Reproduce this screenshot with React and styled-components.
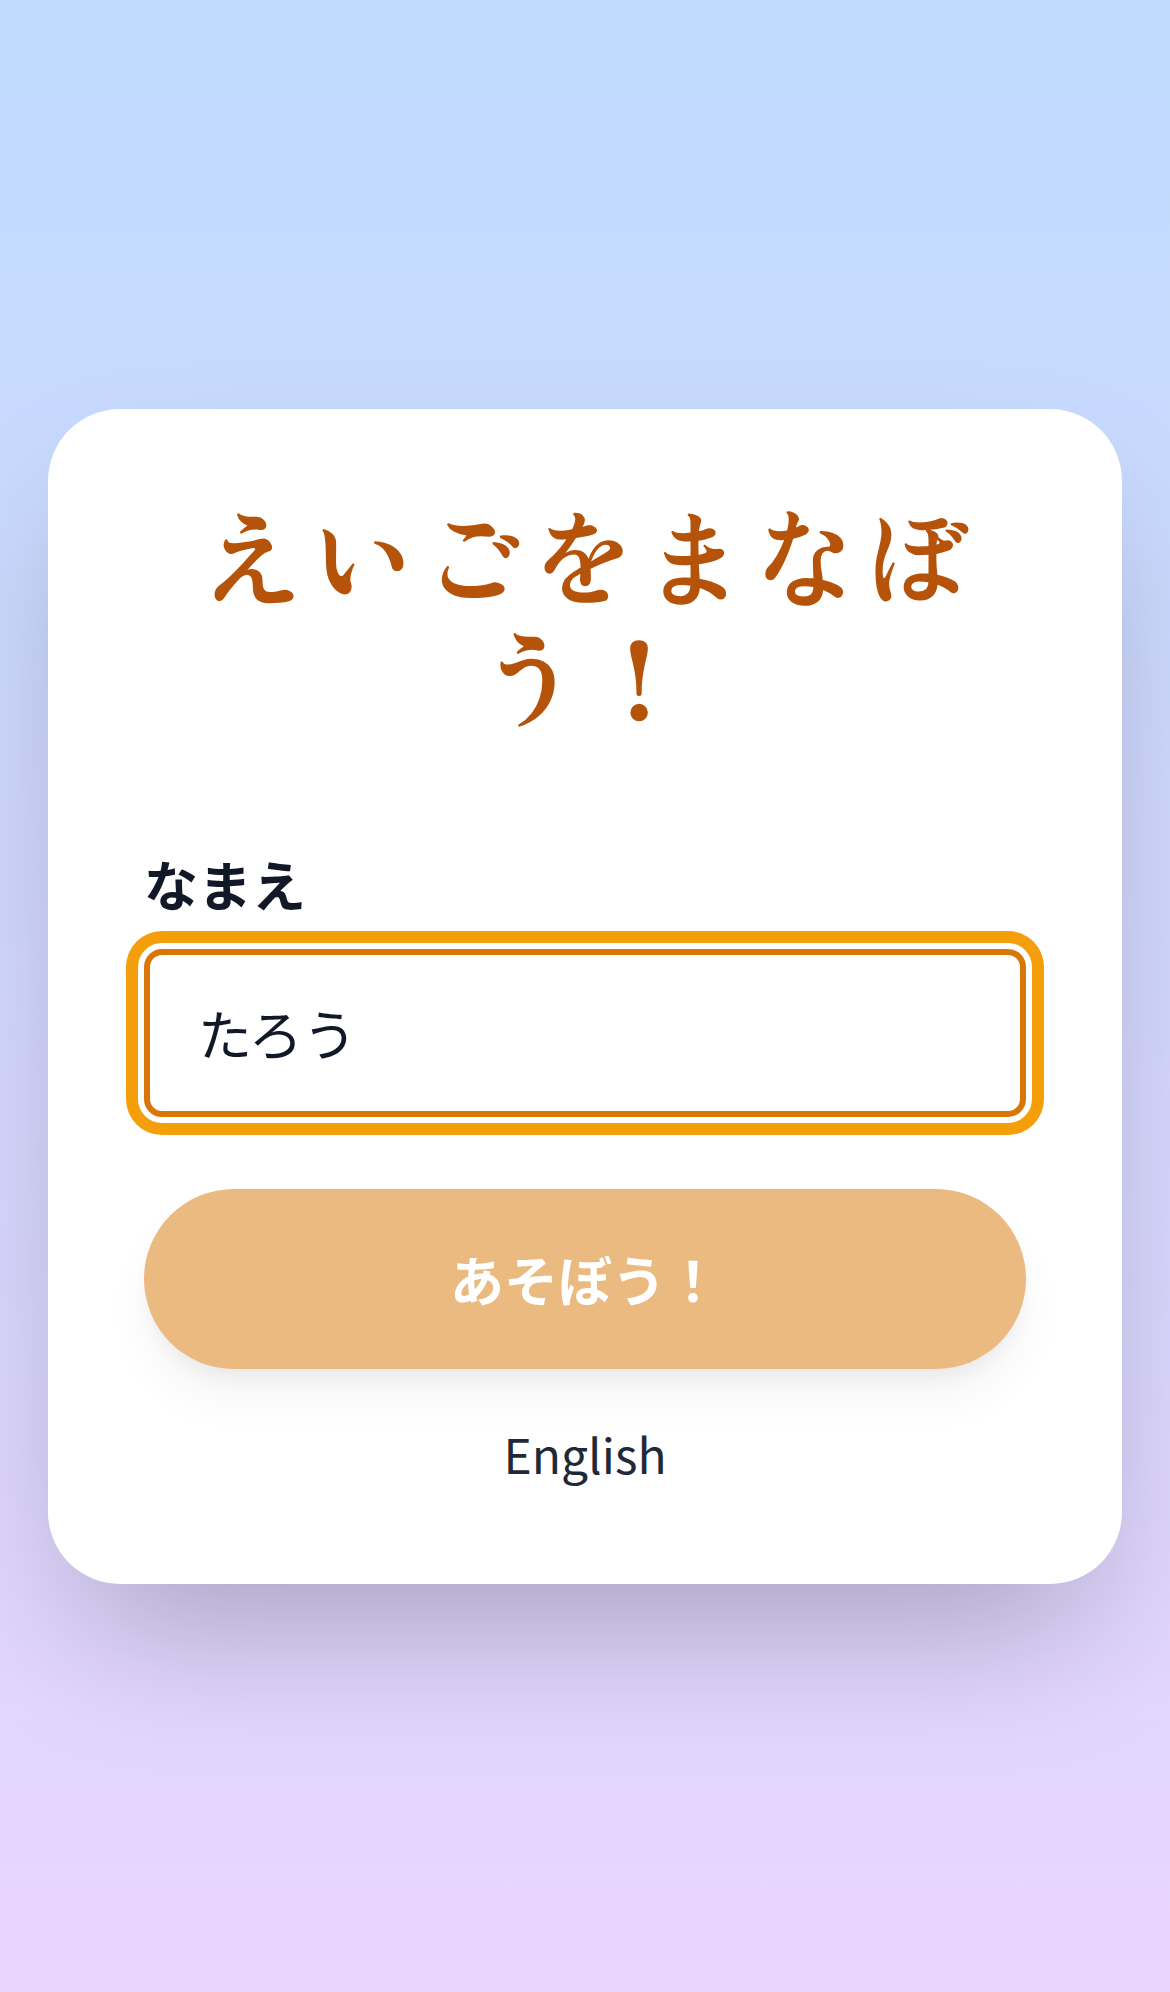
import React, { useState } from 'react';
import styled, { createGlobalStyle } from 'styled-components';

const GlobalStyle = createGlobalStyle`
  * { box-sizing: border-box; }
  html, body { margin: 0; padding: 0; }
  body {
    font-family: "Noto Sans CJK JP", "Noto Sans", sans-serif;
    color: #1f2937;
  }
`;

const Page = styled.div`
  min-height: 100vh;
  display: flex;
  align-items: center;
  justify-content: center;
  padding: 0 48px;
  background: linear-gradient(180deg, #bfdbfe 0%, #e9d5ff 100%);
`;

const Card = styled.div`
  width: 100%;
  background: #ffffff;
  border-radius: 72px;
  padding: 84px 96px 95px;
  box-shadow: 0 75px 150px -36px rgba(0, 0, 0, 0.25);
  display: flex;
  flex-direction: column;
`;

const Title = styled.h1`
  margin: 0 0 110px;
  font-family: "Zen Antique", "Kaisei HarunoUmi", "Noto Sans CJK JP", serif;
  font-size: 108px;
  line-height: 120px;
  letter-spacing: 0.025em;
  font-weight: 400;
  text-align: center;
  color: #b45309;
`;

const Label = styled.label`
  display: block;
  font-size: 54px;
  line-height: 81px;
  font-weight: 600;
  color: #111827;
  margin-bottom: 25px;
`;

const Input = styled.input`
  display: block;
  width: 100%;
  height: 168px;
  padding: 0 48px;
  font-family: "Noto Sans CJK JP", sans-serif;
  font-size: 54px;
  color: #111827;
  background: #fff;
  border: 6px solid #d97706;
  border-radius: 18px;
  outline: none;
  box-shadow: 0 0 0 6px #ffffff, 0 0 0 18px #f59e0b;
`;

const PlayButton = styled.button`
  margin-top: 72px;
  height: 180px;
  width: 100%;
  border: none;
  border-radius: 999px;
  background: #d97706;
  opacity: 0.5;
  color: #ffffff;
  font-family: "Noto Sans CJK JP", sans-serif;
  font-size: 54px;
  font-weight: 700;
  box-shadow: 0 30px 45px -9px rgba(0, 0, 0, 0.1), 0 12px 18px -6px rgba(0, 0, 0, 0.1);
  cursor: pointer;
`;

const LangSwitch = styled.button`
  margin: 48px auto 0;
  background: none;
  border: none;
  padding: 0;
  font-family: "Noto Sans CJK JP", sans-serif;
  font-size: 48px;
  line-height: 72px;
  color: #1f2937;
  cursor: pointer;
`;

export default function App() {
  const [name, setName] = useState('たろう');

  return (
    <>
      <GlobalStyle />
      <Page>
        <Card>
          <Title>えいごをまなぼう！</Title>
          <Label htmlFor="name">なまえ</Label>
          <Input id="name" value={name} onChange={(e) => setName(e.target.value)} />
          <PlayButton>あそぼう！</PlayButton>
          <LangSwitch>English</LangSwitch>
        </Card>
      </Page>
    </>
  );
}
